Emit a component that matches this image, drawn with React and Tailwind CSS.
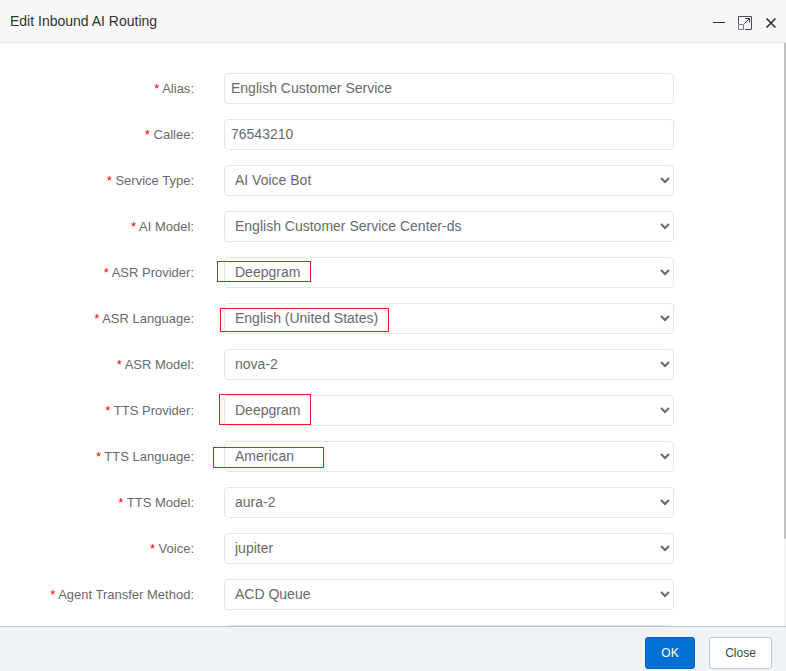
const fields = [
  { id: 'alias', label: 'Alias', type: 'text', value: 'English Customer Service' },
  { id: 'callee', label: 'Callee', type: 'text', value: '76543210' },
  { id: 'serviceType', label: 'Service Type', value: 'AI Voice Bot' },
  { id: 'aiModel', label: 'AI Model', value: 'English Customer Service Center-ds' },
  { id: 'asrProvider', label: 'ASR Provider', value: 'Deepgram', mark: '-left-[7px] top-[4px] w-[94px] h-[21px]' },
  { id: 'asrLanguage', label: 'ASR Language', value: 'English (United States)', mark: '-left-[4px] top-[5px] w-[169px] h-[24px]' },
  { id: 'asrModel', label: 'ASR Model', value: 'nova-2' },
  { id: 'ttsProvider', label: 'TTS Provider', value: 'Deepgram', mark: '-left-[5px] -top-[1px] w-[92px] h-[31px]' },
  { id: 'ttsLanguage', label: 'TTS Language', value: 'American', mark: '-left-[11px] top-[6px] w-[111px] h-[21px]' },
  { id: 'ttsModel', label: 'TTS Model', value: 'aura-2' },
  { id: 'voice', label: 'Voice', value: 'jupiter' },
  { id: 'transferMethod', label: 'Agent Transfer Method', value: 'ACD Queue' },
];

const control = 'block w-full h-[31px] rounded border border-[#e5e6e7] bg-white pb-0.5 text-sm text-[#676a6c]';

function Field({ id, label, type, value, mark }) {
  return (
    <div className="flex items-center gap-[30px]">
      <label htmlFor={id} className="w-[174px] shrink-0 text-right text-[13px] text-[#676a6c]">
        <span className="text-[#ff0000]">* </span>
        {label}:
      </label>
      <div className="relative flex-1">
        {type === 'text' ? (
          <input id={id} type="text" defaultValue={value} className={`${control} px-1.5`} />
        ) : (
          <select id={id} defaultValue={value} className={`${control} pl-1.5`}>
            <option>{value}</option>
          </select>
        )}
        {mark && <span className={`pointer-events-none absolute border border-[#ed1c24] ${mark}`} />}
      </div>
    </div>
  );
}

function WindowButtons() {
  return (
    <div className="flex items-center gap-3 pt-1 text-[#2d2c3b]">
      <button type="button" aria-label="Minimize">
        <svg width="14" height="14" viewBox="0 0 14 14" stroke="currentColor" fill="none">
          <path d="M1 6.5h12" />
        </svg>
      </button>
      <button type="button" aria-label="Maximize">
        <svg width="14" height="14" viewBox="0 0 14 14" stroke="currentColor" fill="none">
          <path d="M.5 8V.5h13v13H7" stroke="#4c4b59" />
          <path d="M.5 8.5h5v5h-5z" stroke="#777783" />
          <path d="M6.5 7.5l4.5-4.5M7.5 2.5h4v4" />
        </svg>
      </button>
      <button type="button" aria-label="Close window">
        <svg width="14" height="14" viewBox="0 0 14 14" stroke="currentColor" strokeWidth="1.6" fill="none">
          <path d="M2.5 2.5l9 9M11.5 2.5l-9 9" />
        </svg>
      </button>
    </div>
  );
}

export default function App() {
  return (
    <div className="flex h-screen flex-col bg-white font-['Liberation_Sans',Arial,sans-serif]">
      <header className="flex h-[43px] shrink-0 items-center justify-between border-b border-[#e7e7e7] bg-[#f8f8f8] pl-2.5 pr-2">
        <h1 className="text-sm text-[#333333]">Edit Inbound AI Routing</h1>
        <WindowButtons />
      </header>

      <main className="flex min-h-0 flex-1">
        <form className="flex flex-1 flex-col gap-[15px] overflow-hidden pt-[30px] pl-5 pr-[110px]">
          {fields.map((field) => (
            <Field key={field.id} {...field} />
          ))}
          <div className="flex pl-[204px]">
            <select aria-label="Queue" className={control} />
          </div>
        </form>
        {/* scroll track */}
        <div className="w-0.5 bg-[#f5f5f5]">
          <div className="h-[85%] rounded-b-sm bg-[#c1c1c1]" />
        </div>
      </main>

      <footer className="flex h-[45px] shrink-0 justify-end gap-3.5 border-t border-[#c3c3c3] bg-[#eff3f6] pt-2.5 pr-3.5 text-xs">
        <button type="button" className="h-8 w-[50px] rounded-[3px] border border-[#0062b8] bg-[#0070d2] text-white">
          OK
        </button>
        <button type="button" className="h-8 w-[63px] rounded-[3px] border border-[#c0c4d0] bg-white text-[#3c4353]">
          Close
        </button>
      </footer>
    </div>
  );
}
